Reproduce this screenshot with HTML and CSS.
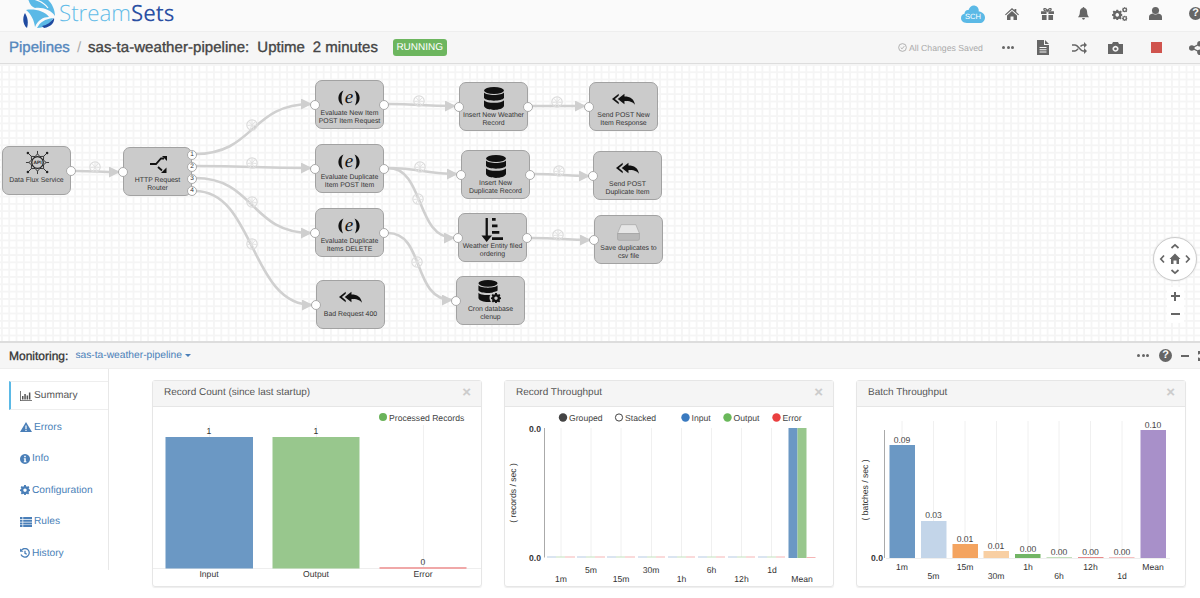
FILE: index.html
```html
<!DOCTYPE html>
<html>
  <head>
    <title>StreamSets - sas-ta-weather-pipeline</title>
    <link rel="stylesheet" href="styles.css">
  </head>
  <body>
    <svg class="defs" width="0" height="0">
      <defs>
        <symbol id="i-return" viewBox="0 0 24 12">
          <path d="M7 0.5 V2.5 L3 6 L7 9.5 V11.5 L0 6 Z"/>
          <path d="M13 0.5 V3.5 C19 3.5 23 6 24 12 C21.5 8.5 18 8 13 8 V11.5 L6 6 Z"/>
        </symbol>
        <symbol id="i-db" viewBox="0 0 20 23">
          <ellipse cx="10" cy="3.5" rx="10" ry="3.5"/>
          <path d="M0 5.5 C2 8.8 18 8.8 20 5.5 V11 C18 14.5 2 14.5 0 11 Z"/>
          <path d="M0 13.2 C2 16.6 18 16.6 20 13.2 V19 C18 24.2 2 24.2 0 19 Z"/>
        </symbol>
        <symbol id="i-e" viewBox="0 0 24 16">
          <path d="M6.5 0.5 C0 3 -0.5 12 6 15.5 C4 11 3.8 5 6.5 0.5 Z"/>
          <path d="M17.5 0.5 C24 3 24.5 12 18 15.5 C20 11 20.2 5 17.5 0.5 Z"/>
        </symbol>
        <symbol id="i-gear" viewBox="0 0 20 20">
          <path fill-rule="evenodd" d="M8.3 0 H11.7 L12.2 2.6 L14.2 3.4 L16.4 2 L18.8 4.4 L17.3 6.6 L18.1 8.5 L20 8.9 V12.1 L17.9 12.6 L17.1 14.5 L18.4 16.6 L16.1 18.9 L14 17.5 L12.1 18.2 L11.6 20 H8.4 L7.9 18.2 L6 17.5 L3.9 18.9 L1.6 16.6 L2.9 14.5 L2.1 12.6 L0 12.1 V8.9 L1.9 8.5 L2.7 6.6 L1.2 4.4 L3.6 2 L5.8 3.4 L7.8 2.6 Z M10 6.8 A3.4 3.4 0 1 0 10.01 6.8 Z"/>
        </symbol>
        <symbol id="i-meter" viewBox="0 0 12 12">
          <circle cx="6" cy="6" r="5.2" fill="none" stroke="#dcdcdc" stroke-width="1.2"/>
          <path d="M6 6 L3 2.5 M6 6 L9 2.8 M6 6 V1.5 M6 6 L1.5 6.5 M6 6 L10.5 6.5 M6 6 L4 10.5 M6 6 L8 10.5" stroke="#e2e2e2" stroke-width="1"/>
        </symbol>
        <marker id="arrow" markerUnits="userSpaceOnUse" markerWidth="12" markerHeight="12" refX="10" refY="5.5" orient="auto">
          <path d="M0 0 L11 5.5 L0 11 Z" fill="#cfcfcf"/>
        </marker>
      </defs>
    </svg>

    <header class="topbar">
      <a class="logo">
        <svg class="logo-mark" viewBox="0 0 32 28">
          <path fill="#5bb9e6" d="M5 -2 H22 C27 0 32 8 32 16 C28 10 20 7 12 8 C9 7 6 4 5 -2 Z"/>
          <path fill="none" stroke="#fafafa" stroke-width="1.2" d="M11 -1 C16 1 21 2 25 8"/>
          <path fill="#5bb9e6" d="M3 10 C11 8.5 22 11 26 17 C20 17 15 20 12 27 C11 20 8 14 3 10 Z"/>
          <path fill="#1f4aa0" d="M2 13 C-1 18 0 25 4 28 C5.5 23 5 18 2 13 Z"/>
          <path fill="#5bb9e6" d="M14 28 C17 22 22 19 30 18 C28 24 21 28 14 28 Z"/>
          <path fill="#1f4aa0" d="M19 26 C24 25 28 22 31 18 C32 22 28 27 21 28 Z"/>
        </svg>
        <span class="logo-text"><span class="logo-a">Stream</span><span class="logo-b">Sets</span></span>
      </a>
      <div class="top-icons">
        <svg class="cloud" viewBox="0 0 24 18"><path fill="#5bb9e6" d="M6 18 C1.5 18 0 15 0 13 C0 10.5 1.5 9 3.5 8.8 C3.5 5.5 6 4.5 7.5 5 C8.5 2 11 0 13.5 0.5 C16.5 1 18 3.5 17.8 6.5 C20.5 6.5 24 9 24 12.5 C24 16 21.5 18 19 18 Z"/><text class="cloud-text" x="12" y="14">SCH</text></svg>
        <svg class="ti ti-home" viewBox="0 0 14 12"><path d="M7 0 L9.5 2.3 V1 H11.3 V4 L14 6.5 L13.2 7.3 L7 1.8 L0.8 7.3 L0 6.5 Z M7 3 L12 7.4 V12 H8.5 V8.5 H5.5 V12 H2 V7.4 Z"/></svg>
        <svg class="ti ti-gift" viewBox="0 0 14 13"><path d="M0 3.5 H14 V6.5 H8 V3.5 H6 V6.5 H0 Z M1 7.5 H6 V13 H1 Z M8 7.5 H13 V13 H8 Z"/><path fill="none" stroke="#666" stroke-width="1.3" d="M7 3.2 C5 3.2 3 2.8 3 1.5 C3 0 6 0.2 7 3.2 C8 0.2 11 0 11 1.5 C11 2.8 9 3.2 7 3.2 Z"/></svg>
        <svg class="ti ti-bell" viewBox="0 0 12 14"><path d="M6 0 C6.6 0 7 0.4 7 1 C9.2 1.4 10 3.5 10 6 C10 8.5 11 9.8 12 11 H0 C1 9.8 2 8.5 2 6 C2 3.5 2.8 1.4 5 1 C5 0.4 5.4 0 6 0 Z M4.5 12 H7.5 C7.5 14.5 4.5 14.5 4.5 12 Z"/></svg>
        <svg class="ti ti-gears" viewBox="0 0 16 14"><use href="#i-gear" x="0" y="2.5" width="10.5" height="10.5"/><use href="#i-gear" x="10" y="0" width="5.5" height="5.5"/><use href="#i-gear" x="10" y="8.5" width="5.5" height="5.5"/></svg>
        <svg class="ti ti-user" viewBox="0 0 14 14"><circle cx="7" cy="3.8" r="3.8"/><path d="M0 14 V10.5 C0 8.5 2 7.5 3.8 7 C5.5 8.5 8.5 8.5 10.2 7 C12 7.5 14 8.5 14 10.5 V14 Z"/></svg>
        <span class="help big">?</span>
      </div>
    </header>

    <div class="toolbar">
      <div class="crumbs">
        <a class="crumb-link">Pipelines</a>
        <span class="crumb-sep">/</span>
        <span class="crumb-name">sas-ta-weather-pipeline:</span>
        <span class="crumb-up">Uptime</span>
        <span class="crumb-up">2 minutes</span>
        <span class="status">RUNNING</span>
      </div>
      <div class="tools">
        <span class="saved"><svg class="saved-icon" viewBox="0 0 10 10"><circle cx="5" cy="5" r="4.3" fill="none" stroke="#aaa"/><path d="M3 5 L4.5 6.5 L7 3.5" fill="none" stroke="#aaa"/></svg>All Changes Saved</span>
        <span class="dots tool-dots"><i></i><i></i><i></i></span>
        <svg class="ti t-doc" viewBox="0 0 12 15"><path fill-rule="evenodd" d="M0 0 H7 V5 H12 V15 H0 Z M2.5 7 V8 H9.5 V7 Z M2.5 9.3 V10.3 H9.5 V9.3 Z M2.5 11.5 V12.5 H9.5 V11.5 Z M8 0 L12 4 H8 Z"/></svg>
        <svg class="ti t-shuffle" viewBox="0 0 15 12"><path fill="none" stroke="#666" stroke-width="1.6" d="M0 3 H3 C6 3 8.5 9 11 9 H13 M0 9 H3 C4.5 9 5.5 7.5 6 6.8 M8.5 4.5 C9.3 3.5 10 3 11 3 H13"/><path d="M12 0 L15 3 L12 6 Z M12 6 L15 9 L12 12 Z"/></svg>
        <svg class="ti t-cam" viewBox="0 0 15 12"><path fill-rule="evenodd" d="M5 0 H10 L11 2 H15 V12 H0 V2 H4 Z M7.5 3.8 A3 3 0 1 0 7.51 3.8 Z M7.5 5.5 A1.4 1.4 0 1 1 7.49 5.5 Z"/></svg>
        <span class="stop"></span>
        <svg class="ti t-share" viewBox="0 0 14 14"><circle cx="11" cy="2.8" r="2.8"/><circle cx="11" cy="11.2" r="2.8"/><circle cx="2.8" cy="7" r="2.8"/><path stroke="#666" stroke-width="1.4" d="M2.8 7 L11 2.8 M2.8 7 L11 11.2"/></svg>
      </div>
    </div>

    <main class="canvas">
      <svg class="edges" width="1200" height="277" viewBox="0 64 1200 277">
        <g fill="none" stroke="#d0d0d0" stroke-width="2.6">
          <path marker-end="url(#arrow)" d="M76 171 C95 171 100 172 119 172"/>
          <path marker-end="url(#arrow)" d="M195 154 C255 154 250 104 311 104"/>
          <path marker-end="url(#arrow)" d="M195 166 C255 166 250 168 311 168"/>
          <path marker-end="url(#arrow)" d="M195 178 C255 178 250 233 311 233"/>
          <path marker-end="url(#arrow)" d="M195 191 C255 191 250 305 312 305"/>
          <path marker-end="url(#arrow)" d="M388 104 C420 104 420 106 455 106"/>
          <path marker-end="url(#arrow)" d="M532 106 C555 106 560 106 585 106"/>
          <path marker-end="url(#arrow)" d="M388 168 C420 168 425 174 457 174"/>
          <path marker-end="url(#arrow)" d="M388 168 C425 168 415 238 454 238"/>
          <path marker-end="url(#arrow)" d="M534 174 C560 174 565 176 589 176"/>
          <path marker-end="url(#arrow)" d="M388 233 C425 233 412 300 452 300"/>
          <path marker-end="url(#arrow)" d="M532 238 C560 238 565 240 590 240"/>
        </g>
        <use href="#i-meter" x="89" y="161" width="12" height="12"/>
        <use href="#i-meter" x="246" y="119" width="12" height="12"/>
        <use href="#i-meter" x="246" y="157" width="12" height="12"/>
        <use href="#i-meter" x="246" y="196" width="12" height="12"/>
        <use href="#i-meter" x="246" y="238" width="12" height="12"/>
        <use href="#i-meter" x="413" y="95" width="12" height="12"/>
        <use href="#i-meter" x="551" y="96" width="12" height="12"/>
        <use href="#i-meter" x="414" y="161" width="12" height="12"/>
        <use href="#i-meter" x="412" y="193" width="12" height="12"/>
        <use href="#i-meter" x="553" y="165" width="12" height="12"/>
        <use href="#i-meter" x="552" y="229" width="12" height="12"/>
        <use href="#i-meter" x="411" y="256" width="12" height="12"/>
      </svg>

      <div class="node n-flux">
        <svg class="nicon ic-api" viewBox="0 0 26 26">
          <g fill="none" stroke="#222" stroke-width="0.9">
            <circle cx="13" cy="13" r="6" stroke-width="1.3"/>
            <path d="M13 4 L15.5 6.8 L19.4 6.6 L19.2 10.5 L22 13 L19.2 15.5 L19.4 19.4 L15.5 19.2 L13 22 L10.5 19.2 L6.6 19.4 L6.8 15.5 L4 13 L6.8 10.5 L6.6 6.6 L10.5 6.8 Z"/>
            <path d="M13 4 V1 M22 13 H25 M13 22 V25 M4 13 H1 M19.4 6.6 L23 3 M19.4 19.4 L23 23 M6.6 19.4 L3 23 M6.6 6.6 L3 3"/>
          </g>
          <g fill="#222">
            <circle cx="3" cy="3" r="1.3"/><circle cx="23" cy="3" r="1.3"/><circle cx="3" cy="23" r="1.3"/><circle cx="23" cy="23" r="1.3"/>
          </g>
          <text class="api-text" x="13" y="15">API</text>
        </svg>
        <span class="nlabel flux-label">Data Flux Service</span>
        <i class="port out"></i>
      </div>

      <div class="node n-router">
        <svg class="nicon ic-router" viewBox="0 0 17 17">
          <path fill="none" stroke="#111" stroke-width="1.8" d="M0 8 H6 L11 2.5 H14"/>
          <path d="M12 0 L17 0 V5 Z"/>
          <path fill="none" stroke="#111" stroke-width="1.8" d="M8 11 L12 14.5"/>
          <path d="M16.5 11.5 V17 H11 Z"/>
        </svg>
        <span class="nlabel">HTTP Request<br>Router</span>
        <i class="port in"></i>
        <i class="port num p1">1</i>
        <i class="port num p2">2</i>
        <i class="port num p3">3</i>
        <i class="port num p4">4</i>
      </div>

      <div class="node n-eval1">
        <svg class="nicon ic-e" viewBox="0 0 24 16"><use href="#i-e"/><text class="e-text" x="12" y="12.5">e</text></svg>
        <span class="nlabel">Evaluate New Item<br>POST Item Request</span>
        <i class="port in"></i><i class="port out"></i>
      </div>
      <div class="node n-eval2">
        <svg class="nicon ic-e" viewBox="0 0 24 16"><use href="#i-e"/><text class="e-text" x="12" y="12.5">e</text></svg>
        <span class="nlabel">Evaluate Duplicate<br>Item POST Item</span>
        <i class="port in"></i><i class="port out"></i>
      </div>
      <div class="node n-eval3">
        <svg class="nicon ic-e" viewBox="0 0 24 16"><use href="#i-e"/><text class="e-text" x="12" y="12.5">e</text></svg>
        <span class="nlabel">Evaluate Duplicate<br>Items DELETE</span>
        <i class="port in"></i><i class="port out"></i>
      </div>
      <div class="node n-bad">
        <svg class="nicon ic-ret"><use href="#i-return"/></svg>
        <span class="nlabel low">Bad Request 400</span>
        <i class="port in"></i>
      </div>

      <div class="node n-ins1">
        <svg class="nicon ic-db"><use href="#i-db"/></svg>
        <span class="nlabel">Insert New Weather<br>Record</span>
        <i class="port in"></i><i class="port out"></i>
      </div>
      <div class="node n-ins2">
        <svg class="nicon ic-db"><use href="#i-db"/></svg>
        <span class="nlabel">Insert New<br>Duplicate Record</span>
        <i class="port in"></i><i class="port out"></i>
      </div>
      <div class="node n-sort">
        <svg class="nicon ic-sort" viewBox="0 0 24 26">
          <path d="M5 0 H7.5 V19 H12 L6.2 26 L0.5 19 H5 Z"/>
          <path d="M12 0 H16 V3 H12 Z M12 7 H18 V10 H12 Z M12 14 H20 V17 H12 Z M12 21 H24 V24 H12 Z"/>
        </svg>
        <span class="nlabel">Weather Entity filed<br>ordering</span>
        <i class="port in"></i><i class="port out"></i>
      </div>
      <div class="node n-cron">
        <svg class="nicon ic-cron" viewBox="0 0 24 24">
          <use href="#i-db" width="20" height="22"/>
          <circle cx="18" cy="18" r="6.5" fill="#cbcbcb"/>
          <use href="#i-gear" x="13" y="13" width="10" height="10"/>
        </svg>
        <span class="nlabel">Cron database<br>clenup</span>
        <i class="port in"></i>
      </div>

      <div class="node n-send1">
        <svg class="nicon ic-ret"><use href="#i-return"/></svg>
        <span class="nlabel">Send POST New<br>Item Response</span>
        <i class="port in"></i>
      </div>
      <div class="node n-send2">
        <svg class="nicon ic-ret"><use href="#i-return"/></svg>
        <span class="nlabel">Send POST<br>Duplicate Item</span>
        <i class="port in"></i>
      </div>
      <div class="node n-save">
        <svg class="nicon ic-hdd" viewBox="0 0 22 16">
          <path fill="#e6e6e6" stroke="#999" stroke-width="0.5" d="M4 0.5 H18 L21.5 9 H0.5 Z"/>
          <path fill="#b9b9b9" stroke="#999" stroke-width="0.5" d="M0.5 9 H21.5 V14 Q21.5 15.5 20 15.5 H2 Q0.5 15.5 0.5 14 Z"/>
        </svg>
        <span class="nlabel">Save duplicates to<br>csv file</span>
        <i class="port in"></i>
      </div>

      <div class="navigator">
        <div class="nav-pad">
          <svg viewBox="0 0 42 42">
            <g fill="none" stroke="#666" stroke-width="1.7">
              <path d="M17.5 10 L21 6.8 L24.5 10"/>
              <path d="M17.5 32 L21 35.2 L24.5 32"/>
              <path d="M10 17.5 L6.8 21 L10 24.5"/>
              <path d="M32 17.5 L35.2 21 L32 24.5"/>
            </g>
            <path fill="#666" d="M21 15.5 L26.5 21 H25 V26 H22.5 V22.5 H19.5 V26 H17 V21 H15.5 Z"/>
          </svg>
        </div>
        <div class="nav-zoom"><span class="plus"></span><span class="minus"></span></div>
      </div>
    </main>

    <section class="monitor">
      <div class="monitor-bar">
        <strong class="mon-title">Monitoring:</strong>
        <a class="mon-link">sas-ta-weather-pipeline</a><span class="caret"></span>
        <div class="mon-tools">
          <span class="dots"><i></i><i></i><i></i></span>
          <span class="help">?</span>
          <span class="dash"></span>
          <svg class="expand" viewBox="0 0 10 10"><path d="M0 0 H4 L2.8 1.2 L4.5 3 L3 4.5 L1.2 2.8 L0 4 Z M0 10 H4 L2.8 8.8 L4.5 7 L3 5.5 L1.2 7.2 L0 6 Z"/></svg>
        </div>
      </div>
      <div class="monitor-body">
        <nav class="side">
          <a class="side-item active">
            <svg class="si" viewBox="0 0 12 10"><path fill="#555" d="M0 0 H0.8 V9.2 H12 V10 H0 Z M2 5 H3.5 V8.5 H2 Z M4.3 3 H5.8 V8.5 H4.3 Z M6.6 4.5 H8.1 V8.5 H6.6 Z M8.9 1.5 H10.4 V8.5 H8.9 Z"/></svg>Summary</a>
          <a class="side-item"><svg class="si" viewBox="0 0 12 10"><path fill-rule="evenodd" d="M6 0 L12 10 H0 Z M5.4 3.5 V7 H6.6 V3.5 Z M5.4 7.8 V9 H6.6 V7.8 Z"/></svg>Errors</a>
          <a class="side-item"><svg class="si sm" viewBox="0 0 10 10"><path fill-rule="evenodd" d="M5 0 A5 5 0 1 0 5.01 0 Z M4.2 1.8 H5.8 V3.2 H4.2 Z M3.8 4.2 H5.8 V7.2 H6.4 V8.2 H3.8 V7.2 H4.3 V5.2 H3.8 Z"/></svg>Info</a>
          <a class="side-item"><svg class="si sm"><use href="#i-gear"/></svg>Configuration</a>
          <a class="side-item"><svg class="si" viewBox="0 0 12 10"><path d="M0 0 H2.5 V2 H0 Z M3.2 0 H12 V2 H3.2 Z M0 2.7 H2.5 V4.7 H0 Z M3.2 2.7 H12 V4.7 H3.2 Z M0 5.4 H2.5 V7.4 H0 Z M3.2 5.4 H12 V7.4 H3.2 Z M0 8 H2.5 V10 H0 Z M3.2 8 H12 V10 H3.2 Z"/></svg>Rules</a>
          <a class="side-item"><svg class="si sm" viewBox="0 0 10 10"><path fill="none" stroke="#4a7fb8" stroke-width="1.3" d="M1.5 2.2 A4.3 4.3 0 1 1 1 6.5 M5 2.8 V5.3 L6.8 6.3"/><path d="M0 0.5 L3.5 3.8 H0 Z"/></svg>History</a>
        </nav>

        <div class="panels">
          <article class="panel">
            <div class="panel-head"><h3>Record Count (since last startup)</h3><span class="close">&times;</span></div>
            <svg class="chart" width="328" height="180" viewBox="153 407 328 180">
              <path class="grid" d="M209.5 425 V568 M316.5 425 V568 M423.5 425 V568"/>
              <circle cx="383" cy="417" r="4" fill="#6ab35a"/>
              <text class="lbl" x="389" y="420.5">Processed Records</text>
              <path class="base" d="M153 568.5 H481"/>
              <rect x="165.5" y="437" width="87.5" height="131.5" fill="#6b98c4"/>
              <rect x="272.5" y="437" width="87" height="131.5" fill="#98c78d"/>
              <rect x="379.5" y="567" width="87" height="2" fill="#f0a8a8"/>
              <text class="mid" x="209" y="434">1</text>
              <text class="mid" x="316" y="434">1</text>
              <text class="mid" x="423" y="565">0</text>
              <text class="mid" x="209" y="577">Input</text>
              <text class="mid" x="316" y="577">Output</text>
              <text class="mid" x="423" y="577">Error</text>
            </svg>
          </article>

          <article class="panel">
            <div class="panel-head"><h3>Record Throughput</h3><span class="close">&times;</span></div>
            <svg class="chart" width="328" height="180" viewBox="505 407 328 180">
              <circle cx="563" cy="417.5" r="4.2" fill="#444"/>
              <text class="lbl" x="569" y="420.8">Grouped</text>
              <circle cx="619" cy="417.5" r="3.6" fill="#fff" stroke="#444" stroke-width="1"/>
              <text class="lbl" x="625" y="420.8">Stacked</text>
              <circle cx="685.5" cy="417.5" r="4.2" fill="#3a7ac0"/>
              <text class="lbl" x="691.5" y="420.8">Input</text>
              <circle cx="727.5" cy="417.5" r="4.2" fill="#6ab85a"/>
              <text class="lbl" x="733.5" y="420.8">Output</text>
              <circle cx="776.5" cy="417.5" r="4.2" fill="#ea4040"/>
              <text class="lbl" x="782.5" y="420.8">Error</text>

              <path class="grid" d="M561 428 V557 M591 428 V557 M621 428 V557 M651.5 428 V557 M681.5 428 V557 M711.5 428 V557 M741.5 428 V557 M771.5 428 V557"/>
              <path class="axis" d="M544.5 428 V557.5"/>
              <text class="tick" x="541" y="431.5">0.0</text>
              <text class="tick" x="541" y="561">0.0</text>
              <text class="ylab" transform="translate(516 493) rotate(-90)">( records / sec )</text>

              <g class="mini">
                <path stroke="#b6cbe2" d="M547 557 H556 M577 557 H586 M607 557 H616 M638 557 H647 M668 557 H677 M698 557 H707 M728 557 H737 M758 557 H767"/>
                <path stroke="#c4e0bd" d="M556 557 H565 M586 557 H595 M616 557 H625 M647 557 H656 M677 557 H686 M707 557 H716 M737 557 H746 M767 557 H776"/>
                <path stroke="#f5b5b5" d="M565 557 H575 M595 557 H605 M625 557 H635 M656 557 H665 M686 557 H695 M716 557 H725 M746 557 H755 M776 557 H785 M806.5 557.5 H815.5"/>
              </g>
              <rect x="788.5" y="428" width="9" height="130" fill="#6b98c4"/>
              <rect x="797.5" y="428" width="9" height="130" fill="#98c78d"/>

              <text class="mid" x="561" y="581.5">1m</text>
              <text class="mid" x="591" y="572.5">5m</text>
              <text class="mid" x="621" y="581.5">15m</text>
              <text class="mid" x="651" y="572.5">30m</text>
              <text class="mid" x="681.5" y="581.5">1h</text>
              <text class="mid" x="711.5" y="572.5">6h</text>
              <text class="mid" x="741.5" y="581.5">12h</text>
              <text class="mid" x="772" y="572.5">1d</text>
              <text class="mid" x="802" y="581.5">Mean</text>
            </svg>
          </article>

          <article class="panel">
            <div class="panel-head"><h3>Batch Throughput</h3><span class="close">&times;</span></div>
            <svg class="chart" width="328" height="180" viewBox="857 407 328 180">
              <path class="grid" d="M902 421 V558 M933.5 421 V558 M965 421 V558 M996.5 421 V558 M1028 421 V558 M1059 421 V558 M1090.5 421 V558 M1122 421 V558 M1153 421 V558"/>
              <path class="axis" d="M884.5 430 V558"/>
              <text class="tick" x="883" y="561">0.0</text>
              <text class="ylab" transform="translate(868 490) rotate(-90)">( batches / sec )</text>

              <path class="base" d="M886 558.5 H1170"/>
              <rect x="889.5" y="445" width="25.5" height="113" fill="#6b98c4"/>
              <rect x="921" y="521" width="25.5" height="37" fill="#c3d5e9"/>
              <rect x="952.5" y="544" width="25.5" height="14" fill="#f4a460"/>
              <rect x="983.5" y="551" width="25.5" height="7" fill="#f8cfa3"/>
              <rect x="1015" y="554" width="25.5" height="4" fill="#72b565"/>
              <rect x="1046.5" y="557" width="25.5" height="1" fill="#c4e0bd"/>
              <rect x="1078" y="557" width="25.5" height="1" fill="#e88a8a"/>
              <rect x="1109" y="557" width="25.5" height="1" fill="#f5c0c0"/>
              <rect x="1140.5" y="430" width="25.5" height="128" fill="#a890c9"/>

              <text class="mid val" x="902" y="443">0.09</text>
              <text class="mid val" x="933.5" y="518">0.03</text>
              <text class="mid val" x="965" y="542">0.01</text>
              <text class="mid val" x="996" y="548.5">0.01</text>
              <text class="mid val" x="1028" y="551.5">0.00</text>
              <text class="mid val" x="1059" y="554.5">0.00</text>
              <text class="mid val" x="1090.5" y="554.5">0.00</text>
              <text class="mid val" x="1122" y="554.5">0.00</text>
              <text class="mid val" x="1153" y="427.5">0.10</text>

              <text class="mid" x="902" y="570">1m</text>
              <text class="mid" x="933.5" y="578.5">5m</text>
              <text class="mid" x="965" y="570">15m</text>
              <text class="mid" x="996" y="578.5">30m</text>
              <text class="mid" x="1028" y="570">1h</text>
              <text class="mid" x="1059" y="578.5">6h</text>
              <text class="mid" x="1090.5" y="570">12h</text>
              <text class="mid" x="1122" y="578.5">1d</text>
              <text class="mid" x="1153" y="570">Mean</text>
            </svg>
          </article>
        </div>
      </div>
    </section>
  </body>
</html>
```

FILE: styles.css
```css
html, body {
  margin: 0;
  padding: 0;
  height: 598px;
  overflow: hidden;
}

body {
  background-color: #fff;
  color: #333;
  font-family: "Liberation Sans", Arial, sans-serif;
  text-rendering: geometricPrecision;
  width: 1200px;
}

.defs {
  position: absolute;
}

.ti {
  fill: #666;
  display: block;
  flex-shrink: 0;
}

/* top bar */
.topbar {
  height: 31px;
  background-color: #fafafa;
  border-bottom: 1px solid #eee;
  display: flex;
  align-items: flex-start;
  justify-content: space-between;
}

.logo {
  display: flex;
  align-items: flex-start;
  margin-left: 23px;
}

.logo-mark {
  width: 32px;
  height: 28px;
  flex-shrink: 0;
}

.logo-text {
  font-family: "Open Sans", sans-serif;
  font-size: 22.3px;
  line-height: 26px;
  margin-left: 4px;
  font-weight: 400;
}

.logo-a {
  color: #62bce8;
  font-weight: 300;
}

.logo-b {
  color: #2b50a3;
}

.top-icons {
  display: flex;
  align-items: center;
  height: 27px;
  width: 250px;
  flex-shrink: 0;
}

.cloud { width: 24px; height: 18px; margin-left: 11px; flex-shrink: 0; }
.cloud-text { font-size: 7.6px; fill: #fff; text-anchor: middle; }
.ti-home { width: 14px; height: 12px; margin-left: 20px; }
.ti-gift { width: 13px; height: 12px; margin-left: 22px; }
.ti-bell { width: 11px; height: 13px; margin-left: 24px; }
.ti-gears { width: 16px; height: 14px; margin-left: 23px; }
.ti-user { width: 13px; height: 13px; margin-left: 21px; }

.help {
  width: 13px;
  height: 13px;
  border-radius: 50%;
  background-color: #666;
  color: #fff;
  font-size: 11px;
  font-weight: bold;
  line-height: 13px;
  text-align: center;
  display: block;
  flex-shrink: 0;
}

.help.big {
  margin-left: 27px;
}

/* toolbar */
.toolbar {
  height: 31px;
  background-color: #f6f6f6;
  border-bottom: 1px solid #ddd;
  display: flex;
  justify-content: space-between;
  align-items: center;
  overflow: hidden;
}

.crumbs {
  display: flex;
  align-items: center;
  margin-left: 9px;
  font-size: 15px;
  color: #444;
  -webkit-text-stroke: 0.35px;
}

.crumb-link { color: #5487bd; }
.crumb-sep { color: #aaa; margin: 0 7px; -webkit-text-stroke: 0; }
.crumb-name { letter-spacing: 0.05px; }
.crumb-up { margin-left: 8px; }

.status {
  background-color: #6db65f;
  color: #fff;
  font-size: 10px;
  line-height: 13px;
  border-radius: 3px;
  padding: 2px 3.5px;
  margin-left: 15px;
  -webkit-text-stroke: 0;
}

.tools {
  display: flex;
  align-items: center;
  width: 302px;
  flex-shrink: 0;
}

.saved {
  color: #aaa;
  font-size: 8.7px;
  display: flex;
  align-items: center;
  white-space: nowrap;
  width: 84px;
  flex-shrink: 0;
}

.saved-icon { width: 9px; height: 9px; margin-right: 2px; flex-shrink: 0; }

.dots {
  display: flex;
  gap: 1.5px;
  flex-shrink: 0;
}

.dots i {
  width: 3px;
  height: 3px;
  border-radius: 50%;
  background-color: #666;
}

.tool-dots { margin-left: 20px; }
.t-doc { width: 12px; height: 15px; margin-left: 23px; }
.t-shuffle { width: 15px; height: 12px; margin-left: 23px; }
.t-cam { width: 15px; height: 12px; margin-left: 21px; }
.stop { width: 11px; height: 11px; background-color: #d0544e; margin-left: 28px; flex-shrink: 0; }
.t-share { width: 14px; height: 14px; margin-left: 27px; }

/* pipeline canvas */
.canvas {
  height: 277px;
  position: relative;
  background-color: #fff;
  background-image:
    linear-gradient(to right, #f5f5f5 1.5px, transparent 1.5px),
    linear-gradient(to bottom, #f5f5f5 1.5px, transparent 1.5px);
  background-size: 7.32px 7.32px;
  background-position: 1px 0;
  overflow: hidden;
}

.edges {
  position: absolute;
  top: 0;
  left: 0;
}

.node {
  position: absolute;
  box-sizing: border-box;
  width: 69px;
  height: 49px;
  background-color: #cbcbcb;
  border: 1px solid #a2a2a2;
  border-radius: 7px;
  display: flex;
  flex-direction: column;
  align-items: center;
  justify-content: flex-end;
  padding-bottom: 3px;
}

.n-flux { left: 2px; top: 82px; }
.n-router { left: 123px; top: 83px; }
.n-eval1 { left: 315px; top: 16px; }
.n-eval2 { left: 315px; top: 80px; }
.n-eval3 { left: 315px; top: 144px; }
.n-bad { left: 316px; top: 216px; }
.n-ins1 { left: 459px; top: 18px; }
.n-ins2 { left: 461px; top: 86px; }
.n-sort { left: 458px; top: 149px; }
.n-cron { left: 456px; top: 212px; }
.n-send1 { left: 589px; top: 18px; }
.n-send2 { left: 593px; top: 87px; }
.n-save { left: 594px; top: 151px; }

.nlabel {
  font-size: 6.9px;
  line-height: 7.5px;
  text-align: center;
  color: #333;
  white-space: nowrap;
}

.nlabel.flux-label {
  margin-bottom: 7px;
}

.nlabel.low {
  margin-bottom: 7px;
}

.nicon {
  position: absolute;
  fill: #111;
}

.ic-api { width: 25px; height: 25px; left: 22px; top: 3px; }
.api-text { font-size: 5px; font-weight: bold; text-anchor: middle; fill: #222; }
.ic-router { width: 17px; height: 17px; left: 26px; top: 8px; }
.ic-e { width: 24px; height: 16px; left: 21px; top: 9px; }
.e-text { font-family: "Liberation Serif", serif; font-size: 19px; font-style: italic; text-anchor: middle; fill: #111; }
.ic-ret { width: 23px; height: 12px; left: 22px; top: 10px; }
.ic-db { width: 20px; height: 23px; left: 24px; top: 4px; }
.ic-sort { width: 22px; height: 24px; left: 22px; top: 4px; }
.ic-cron { width: 24px; height: 24px; left: 21px; top: 3px; }
.ic-hdd { width: 23px; height: 17px; left: 22px; top: 8px; }

.port {
  position: absolute;
  box-sizing: border-box;
  width: 10px;
  height: 10px;
  background-color: #fff;
  border: 1px solid #aaa;
  border-radius: 50%;
  top: 18.5px;
}

.port.in { left: -6px; }
.port.out { right: -6px; }

.port.num {
  right: -6px;
  font-size: 6.5px;
  line-height: 8px;
  font-style: normal;
  text-align: center;
  color: #333;
}

.port.p1 { top: 1.5px; }
.port.p2 { top: 13.5px; }
.port.p3 { top: 25.5px; }
.port.p4 { top: 38px; }

.navigator {
  position: absolute;
  left: 1153px;
  top: 173px;
  display: flex;
  flex-direction: column;
  align-items: center;
}

.nav-pad {
  width: 42px;
  height: 42px;
  background-color: #fff;
  border: 1px solid #ccc;
  border-radius: 50%;
  box-shadow: 0 0 2px #ddd;
}

.nav-zoom {
  margin-top: 6px;
  width: 17px;
  height: 36px;
  background-color: #fff;
  position: relative;
}

.plus, .minus {
  position: absolute;
  left: 4px;
  width: 9px;
  height: 2px;
  background-color: #666;
}

.plus { top: 8px; }
.minus { top: 26px; }

.plus::after {
  content: "";
  position: absolute;
  left: 3.5px;
  top: -3.5px;
  width: 2px;
  height: 9px;
  background-color: #666;
}

/* monitoring */
.monitor {
  border-top: 2px solid #ddd;
}

.monitor-bar {
  height: 25px;
  background-color: #f6f6f6;
  border-bottom: 1px solid #eee;
  display: flex;
  align-items: center;
  position: relative;
  padding-left: 9px;
}

.mon-title {
  font-size: 12px;
  font-weight: normal;
  color: #333;
  -webkit-text-stroke: 0.3px;
}

.mon-link {
  font-size: 10.25px;
  color: #4a7fb8;
  margin-left: 7px;
}

.caret {
  margin-left: 3px;
  border-top: 3px solid #4a7fb8;
  border-left: 3px solid transparent;
  border-right: 3px solid transparent;
}

.mon-tools {
  position: absolute;
  left: 1137px;
  top: 6px;
  display: flex;
  align-items: center;
}

.mon-tools .help {
  margin-left: 10px;
}

.dash {
  width: 8px;
  height: 2px;
  background-color: #666;
  margin-left: 9px;
  flex-shrink: 0;
}

.expand {
  width: 10px;
  height: 10px;
  margin-left: 9px;
  fill: #666;
  flex-shrink: 0;
}

.monitor-body {
  display: flex;
  padding-left: 9px;
}

.side {
  width: 99px;
  height: 189px;
  border-right: 1px solid #e8e8e8;
  padding-top: 12px;
  flex-shrink: 0;
}

.side-item {
  display: flex;
  align-items: center;
  height: 31.5px;
  font-size: 10.2px;
  color: #4a7fb8;
  padding-left: 11px;
  fill: #4a7fb8;
}

.side-item.active {
  height: 27px;
  color: #555;
  background-color: #fff;
  border-left: 2px solid #5bb9e6;
  border-top: 1px solid #eee;
  border-bottom: 1px solid #eee;
  padding-left: 9px;
  width: 88px;
  margin-bottom: 1.5px;
}

.si {
  width: 12px;
  height: 10px;
  margin-right: 2px;
  flex-shrink: 0;
}

.si.sm {
  width: 10px;
}

.panels {
  display: flex;
  gap: 22px;
  margin-left: 43px;
  margin-top: 11px;
}

.panel {
  width: 328px;
  height: 205px;
  border: 1px solid #e6e6e6;
  border-radius: 3px;
  box-shadow: 0 1px 1px #eee;
}

.panel-head {
  height: 23px;
  padding: 0 10px 2px 11px;
  background-color: #f5f5f5;
  border-bottom: 1px solid #e6e6e6;
  display: flex;
  align-items: center;
  justify-content: space-between;
}

.panel-head h3 {
  margin: 0;
  font-size: 10px;
  font-weight: normal;
  color: #555;
}

.close {
  color: #ccc;
  font-size: 15px;
  font-weight: bold;
}

.chart {
  display: block;
}

.chart text {
  font-family: "Liberation Sans", Arial, sans-serif;
  font-size: 8.6px;
  fill: #333;
}

.chart .lbl {
  font-size: 8.65px;
  fill: #444;
}

.chart .mid {
  text-anchor: middle;
}

.chart .val {
  fill: #444;
}

.chart .tick {
  text-anchor: end;
  font-weight: bold;
}

.chart .ylab {
  text-anchor: middle;
}

.grid {
  stroke: #f0f0f0;
  stroke-width: 1;
  fill: none;
}

.axis {
  stroke: #aaa;
  stroke-width: 1;
  fill: none;
}

.base {
  stroke: #eee;
  stroke-width: 1;
}

.mini path {
  stroke-width: 1;
  fill: none;
}
```
